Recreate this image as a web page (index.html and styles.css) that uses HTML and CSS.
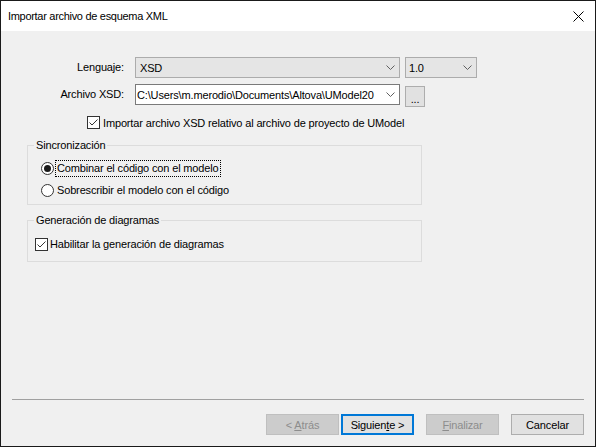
FILE: index.html
```html
<!DOCTYPE html>
<html lang="es">
<head>
<meta charset="utf-8">
<title>Importar archivo de esquema XML</title>
<link rel="stylesheet" href="styles.css">
</head>
<body>
<div class="window">
  <div class="titlebar">
    <span class="title">Importar archivo de esquema XML</span>
    <svg class="close" width="11" height="11" viewBox="0 0 11 11"><path d="M0.5 0.5 L10.5 10.5 M10.5 0.5 L0.5 10.5" stroke="#000" stroke-width="1" fill="none"/></svg>
  </div>
  <div class="body">
    <div class="row row-lang">
      <span class="lbl">Lenguaje:</span>
      <div class="combo combo-ro combo-lang"><span class="ctext">XSD</span><svg class="chev" width="9" height="5" viewBox="0 0 9 5"><path d="M0.5 0.5 L4.5 4.5 L8.5 0.5" stroke="#606060" fill="none"/></svg></div>
      <div class="combo combo-ro combo-ver"><span class="ctext">1.0</span><svg class="chev" width="9" height="5" viewBox="0 0 9 5"><path d="M0.5 0.5 L4.5 4.5 L8.5 0.5" stroke="#606060" fill="none"/></svg></div>
    </div>
    <div class="row row-file">
      <span class="lbl">Archivo XSD:</span>
      <div class="combo combo-edit combo-file"><span class="ctext">C:\Users\m.merodio\Documents\Altova\UModel20</span><svg class="chev" width="9" height="5" viewBox="0 0 9 5"><path d="M0.5 0.5 L4.5 4.5 L8.5 0.5" stroke="#606060" fill="none"/></svg></div>
      <span class="browse">...</span>
    </div>
    <div class="check-row check-rel">
      <svg class="box" width="13" height="13" viewBox="0 0 13 13"><rect x="0.5" y="0.5" width="12" height="12" fill="#fff" stroke="#333"/><path d="M2.5 6.5 L5 9 L10.5 3.5" stroke="#333" fill="none"/></svg>
      <span>Importar archivo XSD relativo al archivo de proyecto de UModel</span>
    </div>
    <fieldset class="group group-sync">
      <legend>Sincronización</legend>
      <div class="opt opt-first">
        <svg class="radio" width="13" height="13" viewBox="0 0 13 13"><circle cx="6.5" cy="6.5" r="6" fill="#fff" stroke="#333"/><circle cx="6.5" cy="6.5" r="3.5" fill="#1a1a1a"/></svg>
        <span class="focus">Combinar el código con el modelo</span>
      </div>
      <div class="opt">
        <svg class="radio" width="13" height="13" viewBox="0 0 13 13"><circle cx="6.5" cy="6.5" r="6" fill="#fff" stroke="#333"/></svg>
        <span class="otext">Sobrescribir el modelo con el código</span>
      </div>
    </fieldset>
    <fieldset class="group group-diag">
      <legend>Generación de diagramas</legend>
      <div class="opt opt-diag">
        <svg class="box" width="13" height="13" viewBox="0 0 13 13"><rect x="0.5" y="0.5" width="12" height="12" fill="#fff" stroke="#333"/><path d="M2.5 6.5 L5 9 L10.5 3.5" stroke="#333" fill="none"/></svg>
        <span class="dtext">Habilitar la generación de diagramas</span>
      </div>
    </fieldset>
    <div class="footer">
      <div class="sep"></div>
      <div class="buttons">
        <span class="btn disabled"><span>&lt; <u>A</u>trás</span></span>
        <span class="btn default"><span>Siguien<u>t</u>e &gt;</span></span>
        <span class="btn disabled gap"><span><u>F</u>inalizar</span></span>
        <span class="btn gap"><span>Cancelar</span></span>
      </div>
    </div>
  </div>
</div>
</body>
</html>
```

FILE: styles.css
```css
* { box-sizing: border-box; }
html, body { margin: 0; padding: 0; }
body {
  font-family: "Liberation Sans", Arial, sans-serif;
  font-size: 11px;
  letter-spacing: -0.15px;
  color: #000;
  background: #fff;
}
.window {
  width: 596px;
  height: 447px;
  border: 1px solid #1a1a1a;
  display: flex;
  flex-direction: column;
  background: #f0f0f0;
}
.titlebar {
  height: 30px;
  flex: none;
  background: #fff;
  display: flex;
  align-items: center;
  justify-content: space-between;
  padding: 0 11px 0 7px;
}
.title { font-size: 11px; letter-spacing: -0.3px; }
.close { display: block; }
.body {
  flex: 1;
  display: flex;
  flex-direction: column;
}
.row {
  display: flex;
  align-items: flex-start;
  height: 21px;
}
.row-lang { margin-top: 26px; }
.row-file { margin-top: 6px; }
.lbl {
  width: 123px;
  text-align: right;
  line-height: 21px;
}
.combo {
  height: 21px;
  display: flex;
  align-items: center;
  border: 1px solid #acacac;
  background: #e5e5e5;
}
.ctext {
  flex: 1;
  overflow: hidden;
  white-space: nowrap;
}
.chev { flex: none; margin: 0 4px 0 6px; display: block; }
.combo-lang { width: 265px; margin-left: 11px; padding-left: 4px; }
.combo-ver { width: 72px; margin-left: 5px; padding-left: 3px; }
.combo-file {
  width: 265px;
  margin-left: 11px;
  padding-left: 1px;
  background: #fff;
  border-color: #7a7a7a;
}
.browse {
  width: 20px;
  height: 21px;
  margin: 2px 0 0 5px;
  border: 1px solid #adadad;
  background: #e1e1e1;
  display: flex;
  align-items: flex-end;
  justify-content: center;
  line-height: 14px;
}
.check-row {
  display: flex;
  align-items: center;
  height: 13px;
}
.check-rel { margin: 11px 0 0 86px; }
.check-rel .box { margin-right: 3px; }
.box, .radio { display: block; flex: none; }
.group {
  margin: 10px 0 0 26px;
  width: 395px;
  border: 1px solid #dcdcdc;
  padding: 0 0 0 13px;
  min-width: 0;
}
.group legend {
  margin-left: -7px;
  padding: 0 2px;
  line-height: 13px;
}
.group-sync { padding-bottom: 6px; }
.opt {
  display: flex;
  align-items: center;
  height: 16px;
}
.opt-first { margin-top: 8px; margin-bottom: 6px; }
.focus {
  margin-left: 2px;
  padding: 0 1px;
  outline: 1px dotted #000;
  outline-offset: 0;
  line-height: 15px;
}
.otext { margin-left: 3px; }
.group-diag {
  margin-top: 9px;
  padding-left: 7px;
  padding-bottom: 9px;
}
.group-diag legend { margin-left: -1px; }
.opt-diag { margin-top: 9px; }
.dtext { margin-left: 2px; }
.footer { margin-top: auto; }
.sep {
  height: 1px;
  background: #a0a0a0;
  margin: 0 11px;
}
.buttons {
  display: flex;
  justify-content: flex-end;
  margin: 14px 11px 11px 0;
}
.btn {
  width: 73px;
  height: 21px;
  border: 1px solid #adadad;
  background: #e1e1e1;
  display: flex;
  align-items: center;
  justify-content: center;
  margin-left: 2px;
  white-space: pre;
}
.btn.gap { margin-left: 12px; }
.btn.disabled {
  background: #cccccc;
  border-color: #bfbfbf;
  color: #8d8d8d;
}
.btn.default {
  border: 2px solid #0078d7;
}
u { text-decoration: underline; text-underline-offset: 1px; }
```
